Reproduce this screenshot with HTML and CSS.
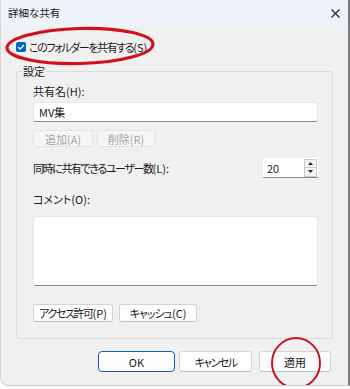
FILE: index.html
```html
<!DOCTYPE html>
<html lang="ja">
<head>
    <meta charset="UTF-8">
    <meta name="viewport" content="width=device-width, initial-scale=1.0">
    <title>詳細な共有</title>
    <link rel="stylesheet" href="styles.css">
</head>
<body>
    <div class="dialog">
        <div class="titlebar">
            <span class="title">詳細な共有</span>
            <svg class="close" width="9" height="9" viewBox="0 0 9 9">
                <path d="M0.5 0.5 L8.5 8.5 M8.5 0.5 L0.5 8.5" stroke="#1f1f1f" stroke-width="1.1" fill="none"/>
            </svg>
        </div>

        <div class="content">
            <label class="share-check">
                <span class="checkbox">
                    <svg width="10" height="10" viewBox="0 0 10 10">
                        <path d="M2.2 5.2 L4.2 7.1 L7.9 3" stroke="#fff" stroke-width="1.4" fill="none"/>
                    </svg>
                </span>
                <span><span class="kana">このフォルダーを共有する</span>(S)</span>
            </label>

            <fieldset class="settings">
                <legend>設定</legend>

                <div class="field-label">共有名(H):</div>
                <div class="textbox">MV集</div>

                <div class="btn-row row-add">
                    <button class="btn btn-add" disabled>追加(A)</button>
                    <button class="btn btn-del" disabled>削除(R)</button>
                </div>

                <div class="users-row">
                    <span><span class="kana">同時に共有できるユーザー数</span>(L):</span>
                    <div class="spin">
                        <span class="spin-value">20</span>
                        <div class="spin-btns">
                            <span class="spin-btn">
                                <svg width="5" height="3" viewBox="0 0 5 3"><path d="M0 3 L2.5 0 L5 3 Z" fill="#222"/></svg>
                            </span>
                            <span class="spin-btn">
                                <svg width="5" height="3" viewBox="0 0 5 3"><path d="M0 0 L2.5 3 L5 0 Z" fill="#222"/></svg>
                            </span>
                        </div>
                    </div>
                </div>

                <div class="field-label comment-label">コメント(O):</div>
                <div class="textarea"></div>

                <div class="btn-row row-perm">
                    <button class="btn btn-perm"><span class="kana">アクセス許可</span>(P)</button>
                    <button class="btn btn-cache"><span class="kana-light">キャッシュ</span>(C)</button>
                </div>
            </fieldset>

            <div class="footer">
                <button class="btn btn-ok">OK</button>
                <button class="btn btn-cancel">キャンセル</button>
                <button class="btn btn-apply">適用</button>
            </div>
        </div>

        <!-- 赤い丸の注記 -->
        <svg class="mark mark-check" width="156" height="44" viewBox="0 0 156 44">
            <ellipse cx="78" cy="21" rx="73" ry="17.5" transform="rotate(-1.5 78 21)" fill="none" stroke="#d0101c" stroke-width="3.2"/>
        </svg>
        <svg class="mark mark-apply" width="54" height="58" viewBox="0 0 54 58">
            <ellipse cx="27" cy="28" rx="24" ry="25" fill="none" stroke="#c8101e" stroke-width="2"/>
        </svg>
    </div>
</body>
</html>
```

FILE: styles.css
```css
* {
    box-sizing: border-box;
}

body {
    margin: 0;
    background-color: #ffffff;
    font-family: "Noto Sans CJK JP", "Noto Sans", sans-serif;
    font-size: 11px;
    color: #1a1a1a;
    font-feature-settings: "palt";
}

/* カナが多い文字列は Windows の UI フォントに合わせて詰める */
.kana {
    letter-spacing: -1.4px;
}

.kana-light {
    letter-spacing: -1px;
}

.dialog {
    position: relative;
    width: 350px;
    height: 386px;
    background-color: #f0f0f0;
    border-left: 1px solid #d6d6d6;
    border-bottom: 1px solid #c8c8c8;
    border-right: 2px solid #7d7d7d;
    border-bottom-left-radius: 8px;
    overflow: hidden;
}

.titlebar {
    height: 27px;
    background-color: #eef3f9;
    display: flex;
    justify-content: space-between;
    align-items: center;
    padding: 0 8px 2px 7px;
}

.title {
    font-size: 10.5px;
}

.close {
    margin-top: 1px;
}

.content {
    padding: 0 15px 0 15px;
}

.share-check {
    display: flex;
    align-items: center;
    gap: 3px;
    height: 14px;
    margin-top: 13px;
}

.checkbox {
    width: 10px;
    height: 10px;
    border-radius: 2px;
    background-color: #0067c0;
    display: flex;
}

.settings {
    margin: 10px 0 0 0;
    padding: 6px 14px 16px 16px;
    border: 1px solid #dcdcdc;
    border-radius: 2px;
}

.settings legend {
    padding: 0 1px;
    margin-left: -11px;
    line-height: 14px;
}

.field-label {
    height: 14px;
    line-height: 14px;
}

.comment-label {
    margin-top: 14px;
}

.textbox {
    margin-top: 4px;
    height: 20px;
    background-color: #ffffff;
    border: 1px solid #e6e6e6;
    border-bottom: 1px solid #8a8a8a;
    border-radius: 3px;
    padding: 0 5px;
    line-height: 18px;
}

.btn-row {
    display: flex;
}

.btn {
    font-family: inherit;
    font-size: 11px;
    font-feature-settings: "palt";
    color: #1a1a1a;
    background-color: #fdfdfd;
    border: 1px solid #d3d3d3;
    border-bottom-color: #c0c0c0;
    border-radius: 3px;
    padding: 0;
}

.row-add {
    margin-top: 8px;
    gap: 4px;
}

.btn[disabled] {
    color: #a3a3a3;
    background-color: #f6f6f6;
    border-color: #e3e3e3;
}

.btn-add {
    width: 60px;
    height: 17px;
}

.btn-del {
    width: 58px;
    height: 17px;
}

.users-row {
    margin-top: 11px;
    display: flex;
    justify-content: space-between;
    align-items: center;
}

.spin {
    width: 55px;
    height: 20px;
    background-color: #ffffff;
    border-bottom: 1px solid #8a8a8a;
    display: flex;
    justify-content: space-between;
    align-items: center;
    padding: 0 1px 0 4px;
}

.spin-btns {
    display: flex;
    flex-direction: column;
    width: 13px;
    height: 18px;
    border: 1px solid #c8c8c8;
    background-color: #f3f3f3;
}

.spin-btn {
    flex: 1;
    display: flex;
    align-items: center;
    justify-content: center;
}

.spin-btn + .spin-btn {
    border-top: 1px solid #c8c8c8;
}

.textarea {
    margin-top: 10px;
    height: 70px;
    background-color: #ffffff;
    border: 1px solid #e6e6e6;
    border-bottom: 1px solid #8a8a8a;
    border-radius: 3px;
}

.row-perm {
    margin-top: 18px;
    gap: 6px;
}

.btn-perm {
    width: 80px;
    height: 18px;
}

.btn-cache {
    width: 78px;
    height: 18px;
}

.footer {
    margin-top: 12px;
    display: flex;
    justify-content: flex-end;
    padding-right: 2px;
}

.footer .btn {
    height: 21px;
}

.btn-ok {
    width: 77px;
    border: 1.5px solid #0a64b8;
    border-radius: 4px;
}

.btn-cancel {
    width: 73px;
    margin-left: 4px;
    letter-spacing: -1.6px;
}

.btn-apply {
    width: 72px;
    margin-left: 7px;
}

.mark {
    position: absolute;
}

.mark-check {
    left: 1px;
    top: 25px;
}

.mark-apply {
    left: 268px;
    top: 335px;
}
```
